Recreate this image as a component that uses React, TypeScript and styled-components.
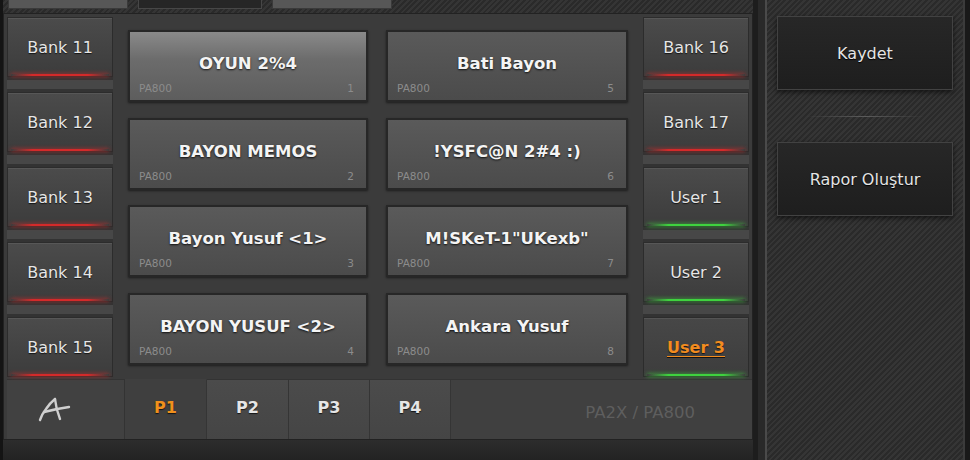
import React from "react";
import styled, { createGlobalStyle, css } from "styled-components";

const GlobalStyle = createGlobalStyle`
  html, body { margin: 0; padding: 0; background: #1b1b1b; }
  body { font-family: "DejaVu Sans", Verdana, sans-serif; }
  * { box-sizing: border-box; }
`;

const stripes = css`
  background: repeating-linear-gradient(
    135deg,
    #2a2a2a 0px,
    #2a2a2a 2px,
    #353535 2px,
    #353535 4px
  );
`;

const Root = styled.div`
  display: flex;
  width: 970px;
  height: 460px;
  overflow: hidden;
  background: #1b1b1b;
`;

const LeftArea = styled.div`
  width: 753px;
  display: flex;
  flex-direction: column;
  border-left: 3px solid #141414;
  ${stripes}
`;

const TabStrip = styled.div`
  height: 13px;
  display: flex;
  align-items: flex-start;
  gap: 10px;
  padding-left: 5px;
`;

const TopTab = styled.div<{ $dark?: boolean; $w: number }>`
  width: ${(p) => p.$w}px;
  height: 9px;
  background: ${(p) => (p.$dark ? "#262626" : "#575757")};
  border: 1px solid ${(p) => (p.$dark ? "#474747" : "#3a3a3a")};
  border-top: none;
`;

const Panel = styled.div`
  width: 750px;
  height: 427px;
  background: #3b3b3b;
  border: 1px solid #222;
  display: flex;
  flex-direction: column;
`;

const PanelBody = styled.div`
  display: flex;
  padding: 3px 3px 0 3px;
  height: 363px;
`;

const BankColumn = styled.div`
  width: 106px;
  display: flex;
  flex-direction: column;
`;

const BankSpacer = styled.div`
  height: 15px;
  background: #474747;
  border-top: 3px solid #333;
  border-bottom: 3px solid #333;
`;

const glowColors = {
  red: "#d42a2a",
  green: "#3fd23f",
};

const BankButton = styled.div<{ $glow: "red" | "green"; $active?: boolean }>`
  position: relative;
  height: 60px;
  display: flex;
  align-items: center;
  justify-content: center;
  background: ${(p) =>
    p.$active
      ? "linear-gradient(180deg, #474747 0%, #3d3d3d 100%)"
      : "linear-gradient(180deg, #4b4b4b 0%, #3c3c3c 100%)"};
  border: 1px solid #2c2c2c;
  box-shadow: inset 0 1px 0 rgba(255, 255, 255, 0.07);
  color: ${(p) => (p.$active ? "#f28c1f" : "#e6e6e6")};
  font-size: 16px;
  font-weight: ${(p) => (p.$active ? "bold" : "normal")};
  text-decoration: ${(p) => (p.$active ? "underline" : "none")};
  text-underline-offset: 3px;
  text-shadow: 0 1px 1px rgba(0, 0, 0, 0.7);
  &::after {
    content: "";
    position: absolute;
    left: 3px;
    right: 3px;
    bottom: 0;
    height: 2px;
    background: linear-gradient(
      90deg,
      transparent 0%,
      ${(p) => glowColors[p.$glow]} 22%,
      ${(p) => glowColors[p.$glow]} 78%,
      transparent 100%
    );
    box-shadow: 0 0 4px ${(p) => glowColors[p.$glow]};
  }
`;

const PresetGrid = styled.div`
  width: 530px;
  display: grid;
  grid-template-columns: 240px 242px;
  grid-template-rows: repeat(4, 72px);
  grid-auto-flow: column;
  column-gap: 18px;
  row-gap: 15.5px;
  padding: 13px 15px 0 15px;
`;

const Card = styled.div<{ $selected?: boolean }>`
  display: flex;
  flex-direction: column;
  padding-top: 14px;
  border: 2px solid #272727;
  background: ${(p) =>
    p.$selected
      ? "linear-gradient(180deg, #8a8a8a 0%, #6c6c6c 40%, #5d5d5d 100%)"
      : "linear-gradient(180deg, #5a5a5a 0%, #4b4b4b 100%)"};
  box-shadow: 0 1px 2px rgba(0, 0, 0, 0.5);
`;

const CardTitle = styled.div`
  flex: 1;
  display: flex;
  align-items: center;
  justify-content: center;
  color: #f4f4f4;
  font-weight: bold;
  font-size: 16.5px;
  text-shadow: 0 1px 2px rgba(0, 0, 0, 0.8);
  white-space: nowrap;
`;

const CardMeta = styled.div`
  height: 14px;
  margin-bottom: 5px;
  display: flex;
  justify-content: space-between;
  align-items: center;
  padding: 0 12px 0 9px;
  font-size: 10.5px;
  color: #8c8c8c;
`;

const BottomBar = styled.div`
  height: 60px;
  margin: 2px 0 0 3px;
  display: flex;
  background: #404040;
`;

const LogoCell = styled.div`
  width: 118px;
  display: flex;
  align-items: center;
  padding-left: 30px;
  background: #414141;
  border-top: 1px solid #333;
  border-right: 1px solid #333;
`;

const PageTab = styled.div<{ $active?: boolean; $w: number }>`
  width: ${(p) => p.$w}px;
  display: flex;
  align-items: center;
  justify-content: center;
  padding-bottom: 5px;
  font-weight: bold;
  font-size: 16px;
  color: ${(p) => (p.$active ? "#f0901c" : "#e6e6e6")};
  background: ${(p) =>
    p.$active ? "#3f3f3f" : "linear-gradient(180deg, #4b4b4b, #454545)"};
  border-top: 1px solid ${(p) => (p.$active ? "#3f3f3f" : "#333")};
  border-right: 1px solid #353535;
  text-shadow: 0 1px 1px rgba(0, 0, 0, 0.7);
`;

const ModelLabel = styled.div`
  flex: 1;
  display: flex;
  align-items: center;
  justify-content: flex-end;
  padding: 6px 57px 0 0;
  color: #5e5e5e;
  font-size: 16.5px;
  background: #404040;
  border-top: 1px solid #333;
`;

const Footer = styled.div`
  flex: 1;
  background: linear-gradient(180deg, #2d2d2d, #232323);
`;

const Divider = styled.div`
  width: 14px;
  background: linear-gradient(90deg, #1d1d1d 0px, #1d1d1d 5px, #292929 5px);
  border-right: 2px solid #4a4a4a;
`;

const Sidebar = styled.div`
  width: 196px;
  ${stripes}
  display: flex;
  flex-direction: column;
  padding: 16px 10px 0 10px;
`;

const SideButton = styled.div`
  height: 74px;
  display: flex;
  align-items: center;
  justify-content: center;
  background: linear-gradient(180deg, #272727, #1e1e1e);
  border: 1px solid #424242;
  box-shadow: 0 2px 5px rgba(0, 0, 0, 0.6);
  color: #e4e4e4;
  font-size: 16px;
  text-shadow: 0 1px 1px #000;
`;

const SideSeparator = styled.div`
  height: 52px;
  display: flex;
  align-items: center;
  justify-content: center;
  &::before {
    content: "";
    width: 120px;
    height: 1px;
    background: linear-gradient(90deg, transparent, #5c5c5c, transparent);
  }
`;

const EdgeLine = styled.div`
  width: 2px;
  background: #3b3b3b;
`;

const EdgeDark = styled.div`
  flex: 1;
  background: #191919;
`;

const LogoA = () => (
  <svg width="34" height="26" viewBox="0 0 34 26" fill="none">
    <g stroke="#cfcfcf" strokeWidth="2.4" strokeLinecap="round" strokeLinejoin="round">
      <path d="M3 23 Q5 17 9 12 Q13 6 18 2" />
      <path d="M18 2 Q19 12 23 22" />
      <path d="M7 15 Q18 12 32 10" />
    </g>
  </svg>
);

const leftBanks = ["Bank 11", "Bank 12", "Bank 13", "Bank 14", "Bank 15"];
const rightBanks: { label: string; glow: "red" | "green"; active?: boolean }[] = [
  { label: "Bank 16", glow: "red" },
  { label: "Bank 17", glow: "red" },
  { label: "User 1", glow: "green" },
  { label: "User 2", glow: "green" },
  { label: "User 3", glow: "green", active: true },
];

const presets = [
  "OYUN 2%4",
  "BAYON MEMOS",
  "Bayon Yusuf <1>",
  "BAYON YUSUF <2>",
  "Bati Bayon",
  "!YSFC@N 2#4 :)",
  'M!SKeT-1"UKexb"',
  "Ankara Yusuf",
];

const pages = [
  { label: "P1", w: 82, active: true },
  { label: "P2", w: 82 },
  { label: "P3", w: 81 },
  { label: "P4", w: 81 },
];

export default function App() {
  return (
    <>
      <GlobalStyle />
      <Root>
        <LeftArea>
          <TabStrip>
            <TopTab $w={120} />
            <TopTab $w={124} $dark />
            <TopTab $w={120} />
          </TabStrip>
          <Panel>
            <PanelBody>
              <BankColumn>
                {leftBanks.map((b, i) => (
                  <React.Fragment key={b}>
                    {i > 0 && <BankSpacer />}
                    <BankButton $glow="red">{b}</BankButton>
                  </React.Fragment>
                ))}
              </BankColumn>
              <PresetGrid>
                {presets.map((p, i) => (
                  <Card key={i} $selected={i === 0}>
                    <CardTitle>{p}</CardTitle>
                    <CardMeta>
                      <span>PA800</span>
                      <span>{i + 1}</span>
                    </CardMeta>
                  </Card>
                ))}
              </PresetGrid>
              <BankColumn>
                {rightBanks.map((b, i) => (
                  <React.Fragment key={b.label}>
                    {i > 0 && <BankSpacer />}
                    <BankButton $glow={b.glow} $active={b.active}>
                      {b.label}
                    </BankButton>
                  </React.Fragment>
                ))}
              </BankColumn>
            </PanelBody>
            <BottomBar>
              <LogoCell>
                <LogoA />
              </LogoCell>
              {pages.map((p) => (
                <PageTab key={p.label} $w={p.w} $active={p.active}>
                  {p.label}
                </PageTab>
              ))}
              <ModelLabel>PA2X / PA800</ModelLabel>
            </BottomBar>
          </Panel>
          <Footer />
        </LeftArea>
        <Divider />
        <Sidebar>
          <SideButton>Kaydet</SideButton>
          <SideSeparator />
          <SideButton>Rapor Oluştur</SideButton>
        </Sidebar>
        <EdgeLine />
        <EdgeDark />
      </Root>
    </>
  );
}
